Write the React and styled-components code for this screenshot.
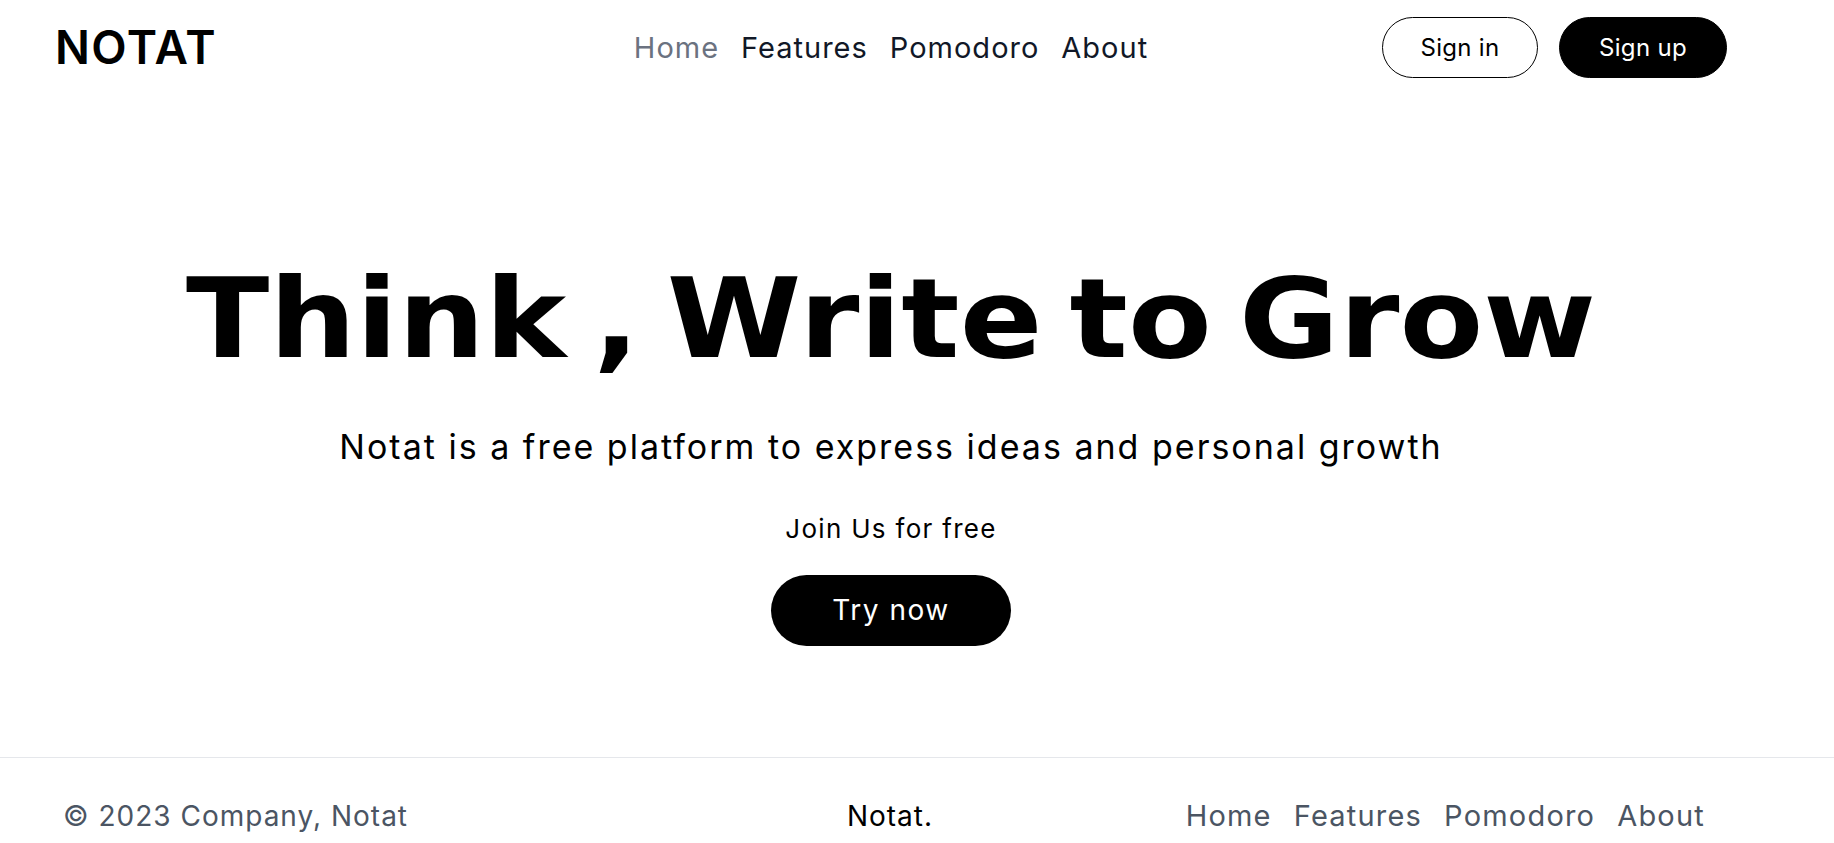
import styled, { createGlobalStyle } from "styled-components";

const GlobalStyle = createGlobalStyle`
  * {
    box-sizing: border-box;
  }
  body {
    margin: 0;
    background: #ffffff;
    font-family: Inter, "Noto Sans", sans-serif;
    color: #000;
  }
`;

const Page = styled.div`
  width: 100%;
  min-height: 100vh;
`;

const Header = styled.header`
  height: 94px;
  padding: 0 107px 0 55px;
  display: grid;
  grid-template-columns: 1fr auto 1fr;
  align-items: center;
`;

const Logo = styled.div`
  font-size: 46px;
  font-weight: 600;
  letter-spacing: 1.4px;
  line-height: 1;
`;

const Nav = styled.nav`
  display: flex;
  align-items: center;
  gap: 22px;
`;

const NavLink = styled.a`
  font-size: 29px;
  font-weight: 400;
  letter-spacing: 1px;
  text-decoration: none;
  color: ${(p) => (p.$active ? "#6b7280" : "#111827")};
  cursor: pointer;
`;

const Actions = styled.div`
  display: flex;
  justify-content: flex-end;
  gap: 21px;
`;

const PillButton = styled.button`
  height: 61px;
  width: ${(p) => p.$w}px;
  border-radius: 999px;
  border: 1px solid #000;
  background: ${(p) => (p.$dark ? "#000" : "#fff")};
  color: ${(p) => (p.$dark ? "#fff" : "#000")};
  font-family: inherit;
  font-size: 24px;
  letter-spacing: 0.3px;
  cursor: pointer;
`;

const Hero = styled.main`
  height: 663px;
  padding: 169px 107px 0 55px;
  display: flex;
  flex-direction: column;
  align-items: center;
`;

const Title = styled.h1`
  margin: 0;
  font-family: "DejaVu Sans", sans-serif;
  font-weight: 800;
  font-size: 111px;
  line-height: 1;
  letter-spacing: 0;
  word-spacing: -14px;
  white-space: nowrap;
  transform: scaleX(1.1);
`;

const Lead = styled.p`
  margin: 54px 0 0;
  font-size: 34px;
  letter-spacing: 2px;
  line-height: 1.13;
`;

const Join = styled.p`
  margin: 47px 0 0;
  font-size: 26px;
  letter-spacing: 1.3px;
  line-height: 1.2;
`;

const TryButton = styled.button`
  margin-top: 30px;
  width: 240px;
  height: 71px;
  border: none;
  border-radius: 999px;
  background: #000;
  color: #fff;
  font-family: inherit;
  font-size: 28px;
  letter-spacing: 1.5px;
  cursor: pointer;
`;

const Footer = styled.footer`
  border-top: 1px solid #e5e7eb;
  padding: 40px 117px 40px 63px;
  display: grid;
  grid-template-columns: 1fr auto 1fr;
  align-items: center;
`;

const Copy = styled.span`
  font-size: 28px;
  letter-spacing: 1px;
  color: #4b5563;
`;

const Brand = styled.span`
  font-size: 28px;
  letter-spacing: 1px;
  color: #000;
`;

const FooterLinks = styled.div`
  display: flex;
  justify-content: flex-end;
  gap: 22px;
  margin-right: 12px;
`;

const FooterLink = styled.a`
  font-size: 29px;
  letter-spacing: 1.2px;
  color: #4b5563;
  text-decoration: none;
`;

const links = ["Home", "Features", "Pomodoro", "About"];

export default function App() {
  return (
    <Page>
      <GlobalStyle />
      <Header>
        <Logo>NOTAT</Logo>
        <Nav>
          {links.map((l, i) => (
            <NavLink key={l} $active={i === 0}>
              {l}
            </NavLink>
          ))}
        </Nav>
        <Actions>
          <PillButton $w={156}>Sign in</PillButton>
          <PillButton $w={168} $dark>
            Sign up
          </PillButton>
        </Actions>
      </Header>
      <Hero>
        <Title>Think , Write to Grow</Title>
        <Lead>Notat is a free platform to express ideas and personal growth</Lead>
        <Join>Join Us for free</Join>
        <TryButton>Try now</TryButton>
      </Hero>
      <Footer>
        <Copy>© 2023 Company, Notat</Copy>
        <Brand>Notat.</Brand>
        <FooterLinks>
          {links.map((l) => (
            <FooterLink key={l}>{l}</FooterLink>
          ))}
        </FooterLinks>
      </Footer>
    </Page>
  );
}
